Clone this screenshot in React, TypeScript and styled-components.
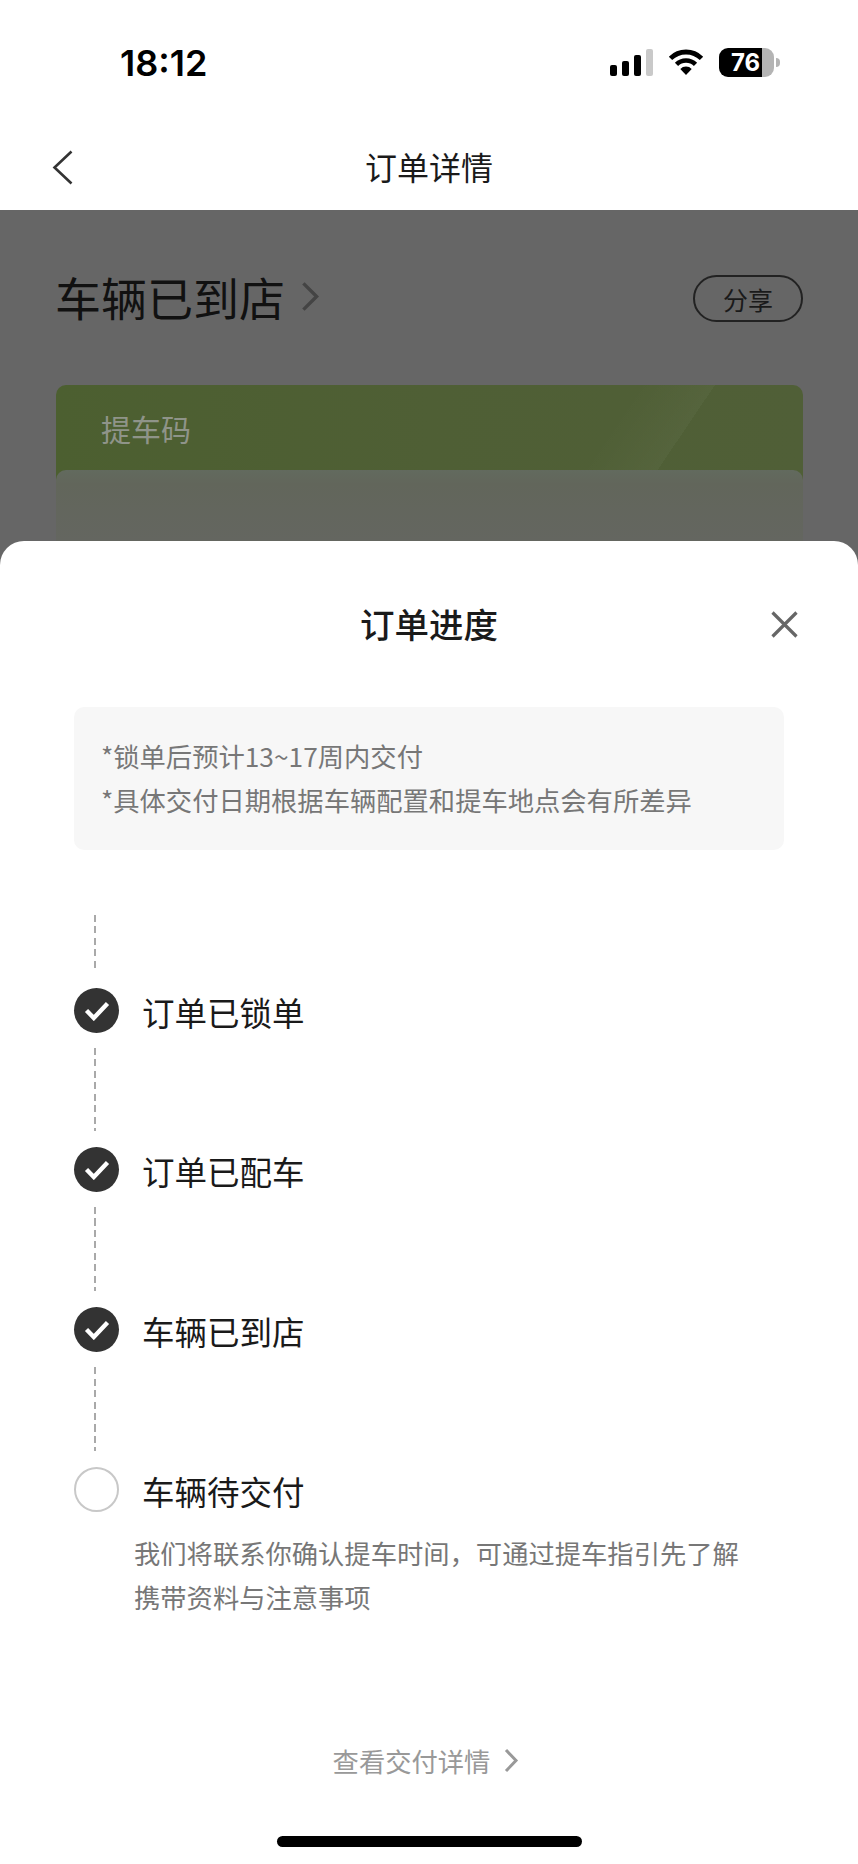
import React from 'react';
import styled, { createGlobalStyle } from 'styled-components';

const GlobalStyle = createGlobalStyle`
  html, body {
    margin: 0;
    padding: 0;
    background: #fff;
  }
  body {
    font-family: "Noto Sans CJK SC", "Noto Sans", sans-serif;
  }
`;

const Phone = styled.div`
  width: 858px;
  height: 1864px;
  overflow: hidden;
  background: #666;
  display: flex;
  flex-direction: column;
`;

const TopBar = styled.div`
  background: #fff;
  height: 210px;
  flex-shrink: 0;
`;

const StatusBar = styled.div`
  height: 124px;
  display: flex;
  align-items: flex-start;
  justify-content: space-between;
  padding: 48px 84px 0 120px;
  box-sizing: border-box;
`;

const Clock = styled.div`
  font-family: Inter, sans-serif;
  font-size: 36px;
  font-weight: 600;
  line-height: 30px;
  color: #000;
`;

const StatusIcons = styled.div`
  display: flex;
  align-items: flex-start;
  gap: 15px;
`;

const Signal = styled.div`
  display: flex;
  align-items: flex-end;
  gap: 5px;
  height: 27px;
  margin-top: 1px;
`;

const SignalBar = styled.div<{ $h: number; $off?: boolean }>`
  width: 7px;
  height: ${(p) => p.$h}px;
  border-radius: 2px;
  background: ${(p) => (p.$off ? '#c9c9c9' : '#000')};
`;

const Battery = styled.div`
  position: relative;
  width: 55px;
  height: 29px;
  border-radius: 9px;
  background: linear-gradient(90deg, #000 78%, #b4b4b4 78%);
  color: #fff;
  font-family: Inter, sans-serif;
  font-size: 24px;
  font-weight: 700;
  line-height: 29px;
  padding-left: 12px;
  box-sizing: border-box;
  &::after {
    content: '';
    position: absolute;
    right: -6px;
    top: 10px;
    width: 4px;
    height: 9px;
    border-radius: 0 4px 4px 0;
    background: #b4b4b4;
  }
`;

const NavBar = styled.div`
  height: 86px;
  display: grid;
  grid-template-columns: 1fr auto 1fr;
  align-items: center;
  padding: 0 52px;
`;

const NavTitle = styled.div`
  font-size: 32px;
  color: #1a1a1a;
  line-height: 40px;
  margin-top: -2px;
`;

const Backdrop = styled.div`
  height: 331px;
  flex-shrink: 0;
  overflow: hidden;
  padding: 65px 55px 0 56px;
  box-sizing: border-box;
`;

const OrderHead = styled.div`
  height: 47px;
  display: flex;
  align-items: center;
  justify-content: space-between;
`;

const OrderStatus = styled.div`
  display: flex;
  align-items: center;
  gap: 15px;
  font-size: 46px;
  line-height: 47px;
  color: #111;
  margin: -4px 0 0 -1px;
`;

const ShareButton = styled.div`
  width: 110px;
  height: 47px;
  box-sizing: border-box;
  border: 2px solid #222;
  border-radius: 24px;
  display: flex;
  align-items: center;
  justify-content: center;
  font-size: 25px;
  color: #1a1a1a;
`;

const CodeCard = styled.div`
  margin-top: 63px;
  height: 240px;
  border-radius: 10px;
  padding-top: 25px;
  box-sizing: border-box;
  background:
    linear-gradient(124deg, transparent 64%, rgba(255, 255, 255, 0.03) 72.5%, transparent 72.5%),
    linear-gradient(90deg, #4c5f30 0%, #4f5f35 50%, #505f37 100%);
`;

const CodeLabel = styled.div`
  font-size: 30px;
  line-height: 36px;
  color: #8f9489;
  padding-left: 45px;
`;

const CodeBody = styled.div`
  margin-top: 24px;
  height: 160px;
  border-radius: 10px 10px 0 0;
  background: linear-gradient(180deg, #626a5e 0px, #62665b 14px, #646660 70px);
`;

const Sheet = styled.div`
  flex: 1;
  background: #fff;
  border-radius: 24px 24px 0 0;
`;

const SheetHeader = styled.div`
  height: 166px;
  display: grid;
  grid-template-columns: 1fr auto 1fr;
  align-items: center;
  padding: 0 60px;
`;

const SheetTitle = styled.div`
  font-size: 34.5px;
  font-weight: 500;
  color: #1a1a1a;
  line-height: 44px;
  margin-top: -3px;
`;

const CloseButton = styled.div`
  justify-self: end;
  display: flex;
`;

const SheetBody = styled.div`
  padding: 0 74px;
`;

const InfoBox = styled.div`
  height: 143px;
  border-radius: 10px;
  background: #f7f7f7;
  padding: 27px;
  box-sizing: border-box;
  font-size: 26.3px;
  line-height: 44px;
  color: #777;
`;

const Timeline = styled.div`
  margin-top: 65px;
`;

const Connector = styled.div<{ $h: number }>`
  width: 2px;
  height: ${(p) => p.$h}px;
  margin: 0 0 16px 20px;
  background: repeating-linear-gradient(180deg, #a9a9a9 0 7px, transparent 7px 11.5px);
`;

const Step = styled.div`
  display: flex;
  align-items: center;
  gap: 23px;
  height: 45px;
  margin-bottom: 15px;
  &:last-of-type {
    margin-bottom: 0;
  }
`;

const StepDot = styled.div<{ $done: boolean }>`
  width: 45px;
  height: 45px;
  box-sizing: border-box;
  border-radius: 50%;
  display: flex;
  align-items: center;
  justify-content: center;
  background: ${(p) => (p.$done ? '#333' : '#fff')};
  border: ${(p) => (p.$done ? 'none' : '2px solid #c8c8c8')};
`;

const StepLabel = styled.div`
  font-size: 32.5px;
  line-height: 44px;
  color: #1a1a1a;
  margin-top: 3px;
`;

const StepNote = styled.div`
  margin: 19px 0 0 60px;
  font-size: 26.3px;
  line-height: 44px;
  color: #777;
`;

const DetailLink = styled.div`
  margin-top: 121px;
  height: 40px;
  display: flex;
  align-items: center;
  justify-content: center;
  gap: 13px;
  padding-right: 6px;
  font-size: 26.3px;
  color: #999;
`;

const HomeIndicator = styled.div`
  width: 305px;
  height: 11px;
  margin: 56px auto 0;
  border-radius: 5.5px;
  background: #000;
`;

function WifiIcon() {
  return (
    <svg width="36" height="28" viewBox="0 0 36 28" fill="none">
      <path d="M2.5 10.4A22 22 0 0 1 33.5 10.4" stroke="#000" strokeWidth="4.8" />
      <path d="M8.5 16.4A13.5 13.5 0 0 1 27.5 16.4" stroke="#000" strokeWidth="4.6" />
      <path d="M18 27L12.3 21A8 8 0 0 1 23.7 21Z" fill="#000" />
    </svg>
  );
}

function Chevron({ color, w, h, sw }: { color: string; w: number; h: number; sw: number }) {
  return (
    <svg width={w} height={h} viewBox={`0 0 ${w} ${h}`} fill="none">
      <path d={`M${sw} ${sw}L${w - sw} ${h / 2}L${sw} ${h - sw}`} stroke={color} strokeWidth={sw} />
    </svg>
  );
}

function BackIcon() {
  return (
    <svg width="21" height="35" viewBox="0 0 21 35" fill="none">
      <path d="M19.5 1.5L2.5 17.5L19.5 33.5" stroke="#333" strokeWidth="2.6" />
    </svg>
  );
}

function CloseIcon() {
  return (
    <svg width="27" height="27" viewBox="0 0 27 27" fill="none">
      <path d="M1.5 1.5L25.5 25.5M25.5 1.5L1.5 25.5" stroke="#666" strokeWidth="3.2" />
    </svg>
  );
}

function CheckIcon() {
  return (
    <svg width="26" height="20" viewBox="0 0 26 20" fill="none">
      <path d="M2.5 9.5L9.8 17L23.5 2.5" stroke="#fff" strokeWidth="4.4" />
    </svg>
  );
}

const steps = [
  { label: '订单已锁单', done: true, line: 57 },
  { label: '订单已配车', done: true, line: 83 },
  { label: '车辆已到店', done: true, line: 84 },
  { label: '车辆待交付', done: false, line: 84 },
];

export default function App() {
  return (
    <Phone>
      <GlobalStyle />
      <TopBar>
        <StatusBar>
          <Clock>18:12</Clock>
          <StatusIcons>
            <Signal>
              <SignalBar $h={11} />
              <SignalBar $h={15} />
              <SignalBar $h={21} />
              <SignalBar $h={27} $off />
            </Signal>
            <WifiIcon />
            <Battery>76</Battery>
          </StatusIcons>
        </StatusBar>
        <NavBar>
          <BackIcon />
          <NavTitle>订单详情</NavTitle>
        </NavBar>
      </TopBar>
      <Backdrop>
        <OrderHead>
          <OrderStatus>
            车辆已到店
            <Chevron color="#444" w={20} h={33} sw={3.4} />
          </OrderStatus>
          <ShareButton>分享</ShareButton>
        </OrderHead>
        <CodeCard>
          <CodeLabel>提车码</CodeLabel>
          <CodeBody />
        </CodeCard>
      </Backdrop>
      <Sheet>
        <SheetHeader>
          <span />
          <SheetTitle>订单进度</SheetTitle>
          <CloseButton>
            <CloseIcon />
          </CloseButton>
        </SheetHeader>
        <SheetBody>
          <InfoBox>
            *锁单后预计13~17周内交付
            <br />
            *具体交付日期根据车辆配置和提车地点会有所差异
          </InfoBox>
          <Timeline>
            {steps.map((s) => (
              <React.Fragment key={s.label}>
                <Connector $h={s.line} />
                <Step>
                  <StepDot $done={s.done}>{s.done && <CheckIcon />}</StepDot>
                  <StepLabel>{s.label}</StepLabel>
                </Step>
              </React.Fragment>
            ))}
          </Timeline>
          <StepNote>
            我们将联系你确认提车时间，可通过提车指引先了解
            <br />
            携带资料与注意事项
          </StepNote>
        </SheetBody>
        <DetailLink>
          查看交付详情
          <Chevron color="#999" w={16} h={27} sw={3} />
        </DetailLink>
        <HomeIndicator />
      </Sheet>
    </Phone>
  );
}
